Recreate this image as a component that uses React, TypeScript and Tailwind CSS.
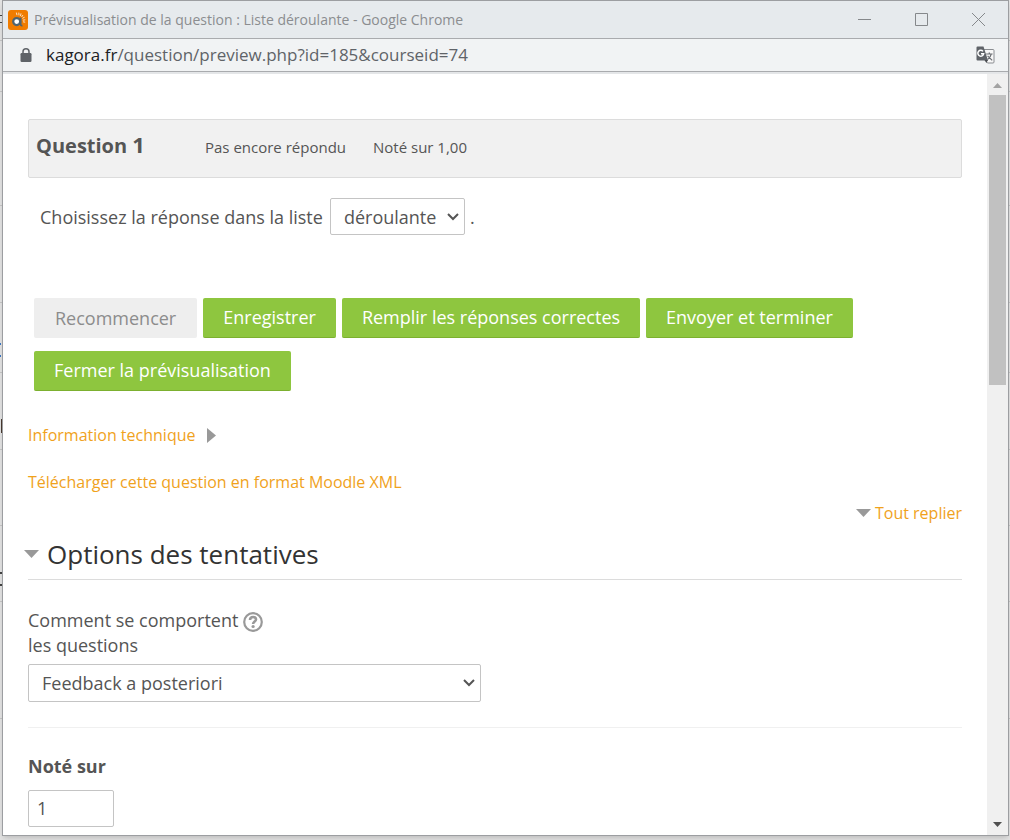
import React from "react";

function Caret({ dir, className = "" }: { dir: "right" | "down"; className?: string }) {
  return dir === "right" ? (
    <svg width="9" height="15" viewBox="0 0 9 15" className={className} aria-hidden="true">
      <path d="M0 0 L9 7.5 L0 15Z" fill="#999" />
    </svg>
  ) : (
    <svg width="15" height="8" viewBox="0 0 15 8" className={className} aria-hidden="true">
      <path d="M0 0 H15 L7.5 8Z" fill="#999" />
    </svg>
  );
}

function SelectBox({ id, value, className }: { id: string; value: string; className: string }) {
  return (
    <span className={`relative flex items-center ${className}`}>
      <select
        id={id}
        className="h-full w-full appearance-none rounded-xs border border-[#c4c4c4] bg-white pl-[13px] text-lg text-[#555]"
      >
        <option>{value}</option>
      </select>
      <svg width="12" height="8" viewBox="0 0 12 8" className="pointer-events-none absolute right-[6px]" aria-hidden="true">
        <path d="M1 1 L6 6 L11 1" fill="none" stroke="#555" strokeWidth="2" />
      </svg>
    </span>
  );
}

function TitleBar() {
  return (
    <header className="flex h-[38px] shrink-0 items-center border-b border-[#a9abae] bg-[#e6eaed] pl-[5px]">
      <svg width="20" height="20" viewBox="0 0 20 20" aria-hidden="true">
        <rect width="20" height="20" rx="3" fill="#f07c00" />
        <circle cx="8.7" cy="11.6" r="3.5" fill="#fff" stroke="#4f6470" strokeWidth="2.2" />
        <path d="M12.6 7.6V14.6Q12.8 15.7 14.4 15.5" fill="none" stroke="#4f6470" strokeWidth="1.8" />
        <path
          d="M8.4 2.6l.6 2.6M10.8 2.6l.2 2.8M13 3.4l-.5 2.6M15 5l-1.4 2M16.6 7.2l-2.2 1.2M17.3 9.8l-2.5.4M17.2 12.2l-2.2-.4"
          stroke="#fde3c6"
          strokeWidth="1"
        />
      </svg>
      <h1 className="flex-1 truncate pl-[6px] text-sm text-[#8b8d90]">
        Prévisualisation de la question : Liste déroulante - Google Chrome
      </h1>
      <div className="flex pr-[1px]">
        <button aria-label="Réduire" className="flex h-9 w-[57px] items-center justify-center">
          <svg width="13" height="13" viewBox="0 0 13 13"><path d="M0 6.5H13" stroke="#85888b" /></svg>
        </button>
        <button aria-label="Agrandir" className="flex h-9 w-[57px] items-center justify-center">
          <svg width="13" height="13" viewBox="0 0 13 13"><path d="M.5 .5H12.5V12.5H.5Z" fill="none" stroke="#85888b" /></svg>
        </button>
        <button aria-label="Fermer" className="flex h-9 w-[57px] items-center justify-center">
          <svg width="13" height="13" viewBox="0 0 13 13"><path d="M0 0L13 13M13 0L0 13" stroke="#85888b" /></svg>
        </button>
      </div>
    </header>
  );
}

function AddressBar() {
  return (
    <div className="flex h-[33px] shrink-0 items-center border-b border-[#a9abae] bg-[#f1f3f4] pr-[13px] pl-[17px]">
      <svg width="12" height="14" viewBox="0 0 12 14" aria-hidden="true">
        <path d="M3 6V3.8a3 3 0 0 1 6 0V6" fill="none" stroke="#5f6368" strokeWidth="1.5" />
        <rect x="0.5" y="5" width="11" height="9" rx="1.2" fill="#5f6368" />
      </svg>
      <p className="flex-1 truncate pl-[14px] text-[17px] text-[#5f6368]">
        <span className="text-[#202124]">kagora.fr</span>/question/preview.php?id=185&amp;courseid=74
      </p>
      <button aria-label="Traduire cette page">
        <svg width="19" height="18" viewBox="0 0 19 18">
          <path d="M8 3.5H17a1 1 0 0 1 1 1V16a1 1 0 0 1-1 1H11.5L8.5 13" fill="#f8f8f8" stroke="#8a8d91" />
          <path d="M1.5 0.5H7.5L12 14.5H1.5a1 1 0 0 1-1-1V1.5a1 1 0 0 1 1-1Z" fill="#5f6368" />
          <path d="M8.5 14H12L10.4 17Z" fill="#4a4d51" />
          <path d="M7 5.4A2.9 2.9 0 1 0 7.6 7.8H5" fill="none" stroke="#fff" strokeWidth="1.5" />
          <path d="M10.1 8H16.6M13.3 6.4V8M15.2 8.2C14.8 10.6 13.2 12.4 11.6 13.4M11.6 9.8L16.2 14.4" fill="none" stroke="#6b6e73" strokeWidth="1.2" />
        </svg>
      </button>
    </div>
  );
}

function GreenButton({ children }: { children: React.ReactNode }) {
  return (
    <button className="h-10 rounded-xs border-b border-[#7cb02f] bg-[#8ec63f] px-5 pb-px text-lg text-white">
      {children}
    </button>
  );
}

function Content() {
  return (
    <main className="min-w-0 flex-1 overflow-hidden pt-[45px] pr-[25px] pl-[25px] text-[#555]">
      <section className="flex h-[59px] items-baseline rounded-xs border border-[#dcdcdc] bg-[#f1f1f1] pt-[9px] pl-[7px]">
        <h2 className="w-[169px] text-xl font-bold">
          Question <span className="text-[22px]">1</span>
        </h2>
        <p className="w-[168px] text-[15px]">Pas encore répondu</p>
        <p className="text-[15px]">Noté sur 1,00</p>
      </section>

      <div className="mt-5 flex items-center pl-3 text-lg">
        <label htmlFor="answer">Choisissez la réponse dans la liste</label>
        <SelectBox id="answer" value="déroulante" className="mr-[5px] ml-[7px] h-[37px] w-[135px]" />.
      </div>

      <div className="mt-[63px] flex flex-wrap gap-x-[6px] gap-y-[13px] pl-[6px]">
        <button disabled className="h-10 rounded-xs bg-[#eee] px-[21px] text-lg text-[#8c8c8c]">
          Recommencer
        </button>
        <GreenButton>Enregistrer</GreenButton>
        <GreenButton>Remplir les réponses correctes</GreenButton>
        <GreenButton>Envoyer et terminer</GreenButton>
        <GreenButton>Fermer la prévisualisation</GreenButton>
      </div>

      <div className="mt-8 text-base text-[#f0a21c]">
        <a href="#technique" className="flex items-center gap-3">
          Information technique
          <Caret dir="right" />
        </a>
        <a href="#xml" className="mt-[23px] block">
          Télécharger cette question en format Moodle XML
        </a>
        <div className="mt-[7px] flex justify-end">
          <a href="#replier" className="flex items-center gap-1">
            <Caret dir="down" />
            Tout replier
          </a>
        </div>
      </div>

      <h3 className="-ml-[4px] mt-[11px] text-[26px] leading-[36px] text-[#333]">
        <a href="#options" className="flex items-center gap-2">
          <Caret dir="down" />
          Options des tentatives
        </a>
      </h3>
      <hr className="mt-[7px] border-[#dcdcdc]" />

      <div className="mt-7 flex items-start">
        <label htmlFor="behaviour" className="w-[215px] text-lg leading-[25px]">
          Comment se comportent les questions
        </label>
        <button aria-label="Aide" className="mt-1">
          <svg width="20" height="20" viewBox="0 0 20 20">
            <circle cx="10" cy="10" r="8.8" fill="none" stroke="#999" strokeWidth="2.2" />
            <path d="M7 8C7 4 13.2 4.2 13 7.5C12.9 9.5 10.1 9.6 10.1 12" fill="none" stroke="#999" strokeWidth="2.6" />
            <circle cx="10.1" cy="14.5" r="1.6" fill="#999" />
          </svg>
        </button>
      </div>
      <SelectBox id="behaviour" value="Feedback a posteriori" className="mt-[6px] h-[38px] w-[453px] max-w-full" />

      <hr className="mt-[25px] border-[#f0f0f0]" />

      <label htmlFor="mark" className="mt-6 block text-lg font-bold">
        Noté sur
      </label>
      <input
        id="mark"
        defaultValue="1"
        className="mt-[10px] block h-[37px] w-[86px] rounded-xs border border-[#c4c4c4] pb-px pl-2 text-lg text-[#555]"
      />
    </main>
  );
}

function ScrollBar() {
  return (
    <div className="flex w-[21px] shrink-0 flex-col items-center bg-[#f0f0f0]" aria-hidden="true">
      <svg width="9" height="5" viewBox="0 0 9 5" className="mt-[9px]"><path d="M0 5L4.5 0L9 5Z" fill="#a3a3a3" /></svg>
      <div className="mt-[7px] h-[290px] w-[17px] bg-[#c1c1c1]" />
      <svg width="9" height="5" viewBox="0 0 9 5" className="mt-auto mb-2"><path d="M0 0H9L4.5 5Z" fill="#505050" /></svg>
    </div>
  );
}

/* Slivers of the page that lies behind the window */
function Backdrop() {
  return (
    <div className="absolute inset-0 bg-[#e2e2e2]" aria-hidden="true">
      <div className="absolute inset-x-0 top-[40px] h-px bg-[#c6c6c6]" />
      <div className="absolute inset-x-0 top-[91px] h-px bg-[#c6c6c6]" />
      <div className="absolute inset-x-0 top-[205px] h-px bg-[#c6c6c6]" />
      <div className="absolute inset-x-0 top-[302px] h-px bg-[#c6c6c6]" />
      <div className="absolute inset-x-0 top-[372px] h-px bg-[#c6c6c6]" />
      <div className="absolute inset-x-0 top-[449px] h-px bg-[#c6c6c6]" />
      <div className="absolute inset-x-0 top-[525px] h-px bg-[#c6c6c6]" />
      <div className="absolute inset-x-0 top-[601px] h-px bg-[#c6c6c6]" />
      <div className="absolute inset-x-0 top-[718px] h-px bg-[#c6c6c6]" />
      <div className="absolute top-[15px] left-0 h-[8px] w-[3px] border-y border-[#444]" />
      <div className="absolute top-[343px] left-0 h-[14px] w-px border-y-2 border-[#3a76c4]" />
      <div className="absolute top-[419px] left-px h-[14px] w-px bg-[#4a3a30]" />
      <div className="absolute top-[572px] left-0 h-[14px] w-[3px] border-y-2 border-[#444]" />
    </div>
  );
}

export default function App() {
  return (
    <div className="relative h-screen overflow-hidden pr-px pb-1 pl-[2px] font-['Open_Sans',sans-serif]">
      <Backdrop />
      <div className="relative flex h-full flex-col border border-[#9c9ea1] bg-white shadow-md">
        <TitleBar />
        <AddressBar />
        <div className="flex min-h-0 flex-1 border-t-2 border-[#e4e6e8]">
          <Content />
          <ScrollBar />
        </div>
      </div>
    </div>
  );
}
